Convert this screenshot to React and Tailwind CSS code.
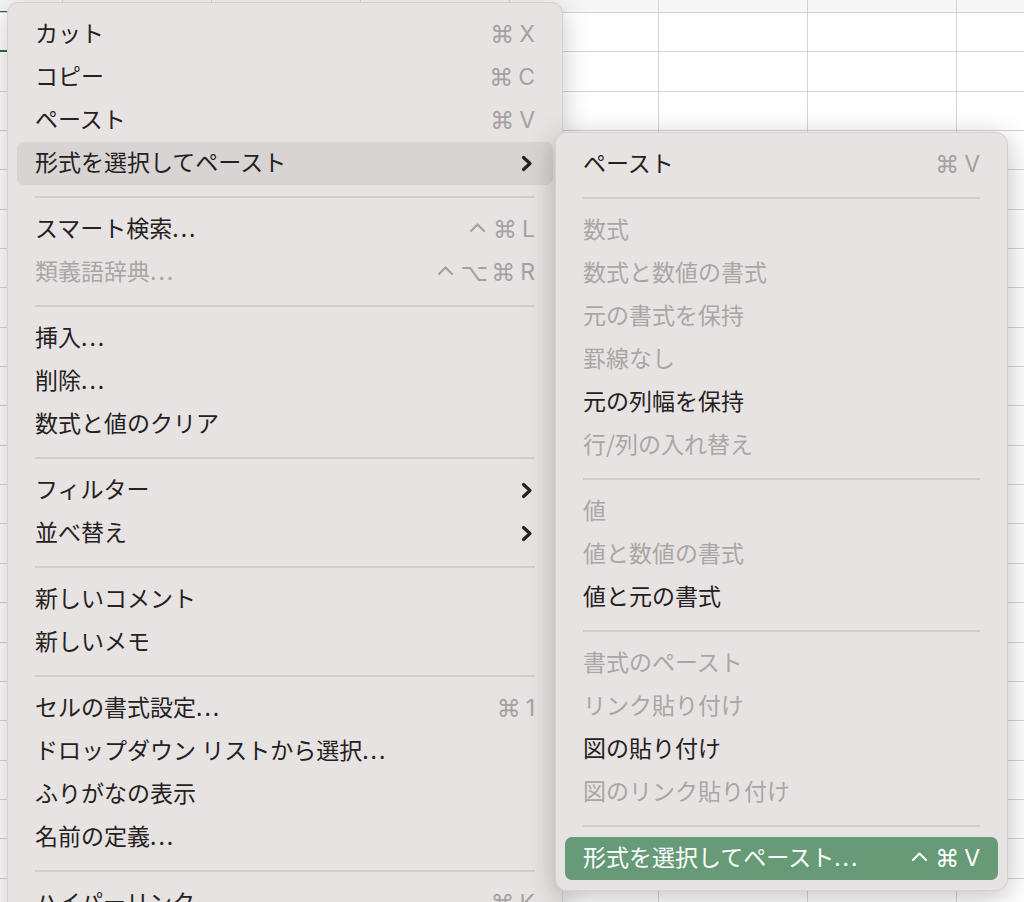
import { Fragment } from "react";

const JP = { fontFamily: '"Noto Sans CJK JP", "Noto Sans", sans-serif' };
const SYM = { fontFamily: '"DejaVu Sans", "Liberation Sans", sans-serif' };
const LAT = { fontFamily: 'Inter, "Liberation Sans", sans-serif' };

const mainItems = [
  { label: "カット", sc: ["⌘", "X"] },
  { label: "コピー", sc: ["⌘", "C"] },
  { label: "ペースト", sc: ["⌘", "V"] },
  { label: "形式を選択してペースト", sub: true, active: true },
  "sep",
  { label: "スマート検索...", sc: ["⌃", "⌘", "L"] },
  { label: "類義語辞典...", sc: ["⌃", "⌥", "⌘", "R"], disabled: true },
  "sep",
  { label: "挿入..." },
  { label: "削除..." },
  { label: "数式と値のクリア" },
  "sep",
  { label: "フィルター", sub: true },
  { label: "並べ替え", sub: true },
  "sep",
  { label: "新しいコメント" },
  { label: "新しいメモ" },
  "sep",
  { label: "セルの書式設定...", sc: ["⌘", "1"] },
  { label: "ドロップダウン リストから選択..." },
  { label: "ふりがなの表示" },
  { label: "名前の定義..." },
  "sep",
  { label: "ハイパーリンク...", sc: ["⌘", "K"] },
];

const subItems = [
  { label: "ペースト", sc: ["⌘", "V"] },
  "sep",
  { label: "数式", disabled: true },
  { label: "数式と数値の書式", disabled: true },
  { label: "元の書式を保持", disabled: true },
  { label: "罫線なし", disabled: true },
  { label: "元の列幅を保持" },
  { label: "行/列の入れ替え", disabled: true },
  "sep",
  { label: "値", disabled: true },
  { label: "値と数値の書式", disabled: true },
  { label: "値と元の書式" },
  "sep",
  { label: "書式のペースト", disabled: true },
  { label: "リンク貼り付け", disabled: true },
  { label: "図の貼り付け" },
  { label: "図のリンク貼り付け", disabled: true },
  "sep",
  { label: "形式を選択してペースト...", sc: ["⌃", "⌘", "V"], green: true },
];

// control key caret, drawn since the font glyph is tiny
function Caret() {
  return (
    <svg width="17" height="12" viewBox="0 0 17 12" className="mr-[4px] -mt-[4px]">
      <path d="M2 9 L8.5 2.5 L15 9" fill="none" stroke="currentColor" strokeWidth="2.2" strokeLinecap="round" strokeLinejoin="round" />
    </svg>
  );
}

function Shortcut({ keys, white }) {
  return (
    <div className={`flex items-center gap-[3px] ${white ? "text-white" : "text-[#a5a1a1]"}`}>
      {keys.map((k, i) => {
        if (k === "⌃") return <Caret key={i} />;
        if (/^[A-Z0-9]$/.test(k))
          return (
            <span key={i} className="text-[23px] leading-none ml-[2px]" style={LAT}>
              {k}
            </span>
          );
        return (
          <span key={i} className="text-[24px] leading-none" style={SYM}>
            {k}
          </span>
        );
      })}
    </div>
  );
}

function Chevron() {
  return (
    <svg width="13" height="17" viewBox="0 0 13 17" className="mr-[2px]">
      <path d="M3.5 2.5 L10 8.5 L3.5 14.5" fill="none" stroke="#262222" strokeWidth="3.2" strokeLinecap="round" strokeLinejoin="round" />
    </svg>
  );
}

function Label({ text }) {
  // macOS menus draw the trailing dots wide apart
  if (text.endsWith("...")) {
    return (
      <span className="text-[23px] leading-none whitespace-pre" style={JP}>
        {text.slice(0, -3)}
        <span className="tracking-[2px]">...</span>
      </span>
    );
  }
  return (
    <span className="text-[23px] leading-none whitespace-pre" style={JP}>
      {text}
    </span>
  );
}

function MenuList({ items }) {
  return items.map((it, i) => {
    if (it === "sep") {
      return (
        <div key={i} className="h-[23px] flex items-center px-[18px]">
          <div className="h-[2px] w-full bg-[#d2cdcd]" />
        </div>
      );
    }
    let cls = "text-[#242121]";
    if (it.disabled) cls = "text-[#aaa6a6]";
    if (it.green) cls = "text-white bg-[#679a77]";
    if (it.active) cls = "text-[#242121] bg-[#d9d4d4]";
    return (
      <div key={i} className={`h-[43px] flex items-center justify-between pl-[18px] pr-[18px] rounded-[7px] ${cls}`}>
        <div className="-mt-px">
          <Label text={it.label} />
        </div>
        {it.sc && <Shortcut keys={it.sc} white={it.green} />}
        {it.sub && <Chevron />}
      </div>
    );
  });
}

function Sheet() {
  const cols = [63, 149, 149, 149, 149, 149, 149, 149];
  return (
    <div className="flex flex-col bg-white">
      <div className="h-[13px] flex bg-[#f6f6f6] border-b border-[#d4d4d4]">
        {cols.map((w, c) => (
          <div key={c} className="shrink-0 border-r border-[#d4d4d4]" style={{ width: w }} />
        ))}
      </div>
      {Array.from({ length: 23 }).map((_, r) => (
        <div key={r} className="h-[39.35px] flex border-b border-[#d4d4d4]">
          {cols.map((w, c) => (
            <div
              key={c}
              className={`shrink-0 border-r border-[#d4d4d4] ${
                r === 0 && c === 0 ? "shadow-[inset_0_1px_0_#1f7244,inset_0_-2px_0_#1f7244] -mt-[2px] h-[41px]" : ""
              }`}
              style={{ width: w }}
            />
          ))}
        </div>
      ))}
    </div>
  );
}

export default function App() {
  return (
    <div className="relative w-[1024px] h-[902px] overflow-hidden bg-white">
      <Sheet />

      {/* main context menu */}
      <div className="absolute left-[7px] top-[2px] w-[556px] bg-[#e8e3e3] rounded-[11px] border border-[#d6d1d1] px-[9px] pt-[10px] pb-[10px] shadow-[0_6px_28px_rgba(0,0,0,0.22)]">
        <MenuList items={mainItems} />
      </div>

      {/* paste special submenu */}
      <div className="absolute left-[555px] top-[132px] w-[453px] bg-[#e8e3e3] rounded-[12px] border border-[#d6d1d1] px-[9px] py-[10px] shadow-[0_6px_28px_rgba(0,0,0,0.25)]">
        <MenuList items={subItems} />
      </div>
    </div>
  );
}
